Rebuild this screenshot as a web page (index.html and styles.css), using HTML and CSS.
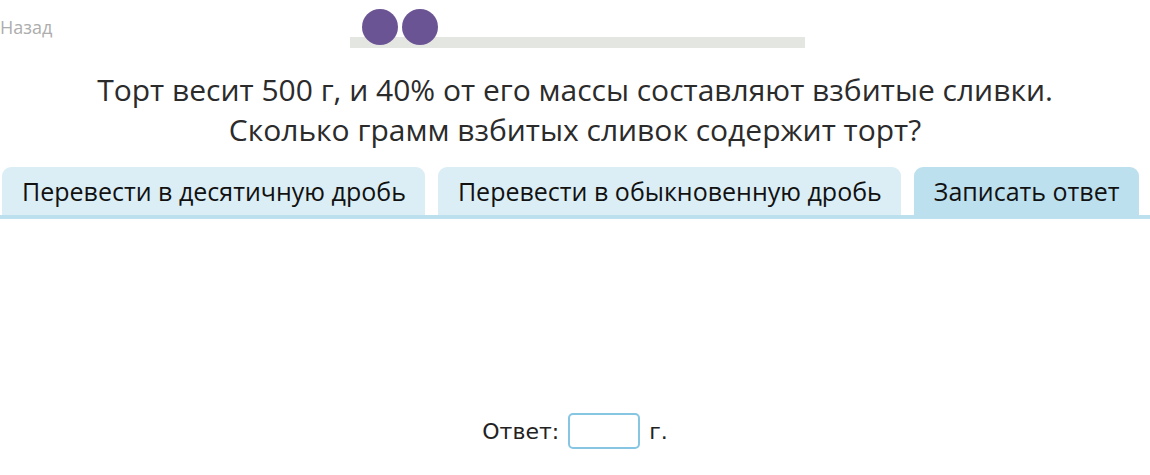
FILE: index.html
```html
<!DOCTYPE html>
<html lang="ru">
<head>
  <meta charset="UTF-8">
  <title>Задача</title>
  <link rel="stylesheet" href="styles.css">
</head>
<body>

  <div class="top">
    <a class="back" href="#">Назад</a>
    <div class="progress">
      <span class="dot"></span>
      <span class="dot"></span>
    </div>
  </div>

  <h1 class="question">Торт весит 500 г, и 40% от его массы составляют взбитые сливки.<br>
    Сколько грамм взбитых сливок содержит торт?</h1>

  <div class="tabs">
    <button class="tab">Перевести в десятичную дробь</button>
    <button class="tab">Перевести в обыкновенную дробь</button>
    <button class="tab active">Записать ответ</button>
  </div>

  <div class="answer">
    <label for="answer">Ответ:</label>
    <input type="text" id="answer" name="answer">
    <span>г.</span>
  </div>

</body>
</html>
```

FILE: styles.css
```css
body {
  margin: 0;
  font-family: "Open Sans", sans-serif;
  color: #333;
  background: #fff;
}

.top {
  position: relative;
  height: 55px;
}

.back {
  position: absolute;
  left: 0;
  top: 15px;
  font-size: 18px;
  color: #adadad;
  text-decoration: none;
}

.progress {
  position: absolute;
  left: 350px;
  top: 37px;
  width: 455px;
  height: 11px;
  background-color: #e4e6e2;
}

.dot {
  position: absolute;
  top: -28px;
  width: 36px;
  height: 36px;
  border-radius: 50%;
  background-color: #6b5494;
}

.dot:first-child {
  left: 12px;
}

.dot:last-child {
  left: 52px;
}

.question {
  margin: 15px 0 0;
  font-size: 30px;
  font-weight: normal;
  line-height: 40px;
  text-align: center;
  color: #2b2b2b;
}

.tabs {
  display: flex;
  gap: 13px;
  margin-top: 17px;
  padding-left: 2px;
  border-bottom: 4px solid #bde0ee;
}

.tab {
  height: 48px;
  padding: 0 19px 0 20px;
  font-family: "Open Sans", sans-serif;
  font-size: 25px;
  color: #111;
  background-color: #dbeef5;
  border: none;
  border-radius: 9px 9px 0 0;
}

.tab.active {
  background-color: #bde0ee;
}

.answer {
  display: flex;
  justify-content: center;
  align-items: center;
  gap: 9px;
  margin-top: 194px;
  font-family: "DejaVu Sans", Verdana, sans-serif;
  font-size: 22px;
  color: #222;
}

.answer input {
  width: 68px;
  height: 32px;
  padding: 0;
  border: 2px solid #86c6e2;
  border-radius: 5px;
}
```
